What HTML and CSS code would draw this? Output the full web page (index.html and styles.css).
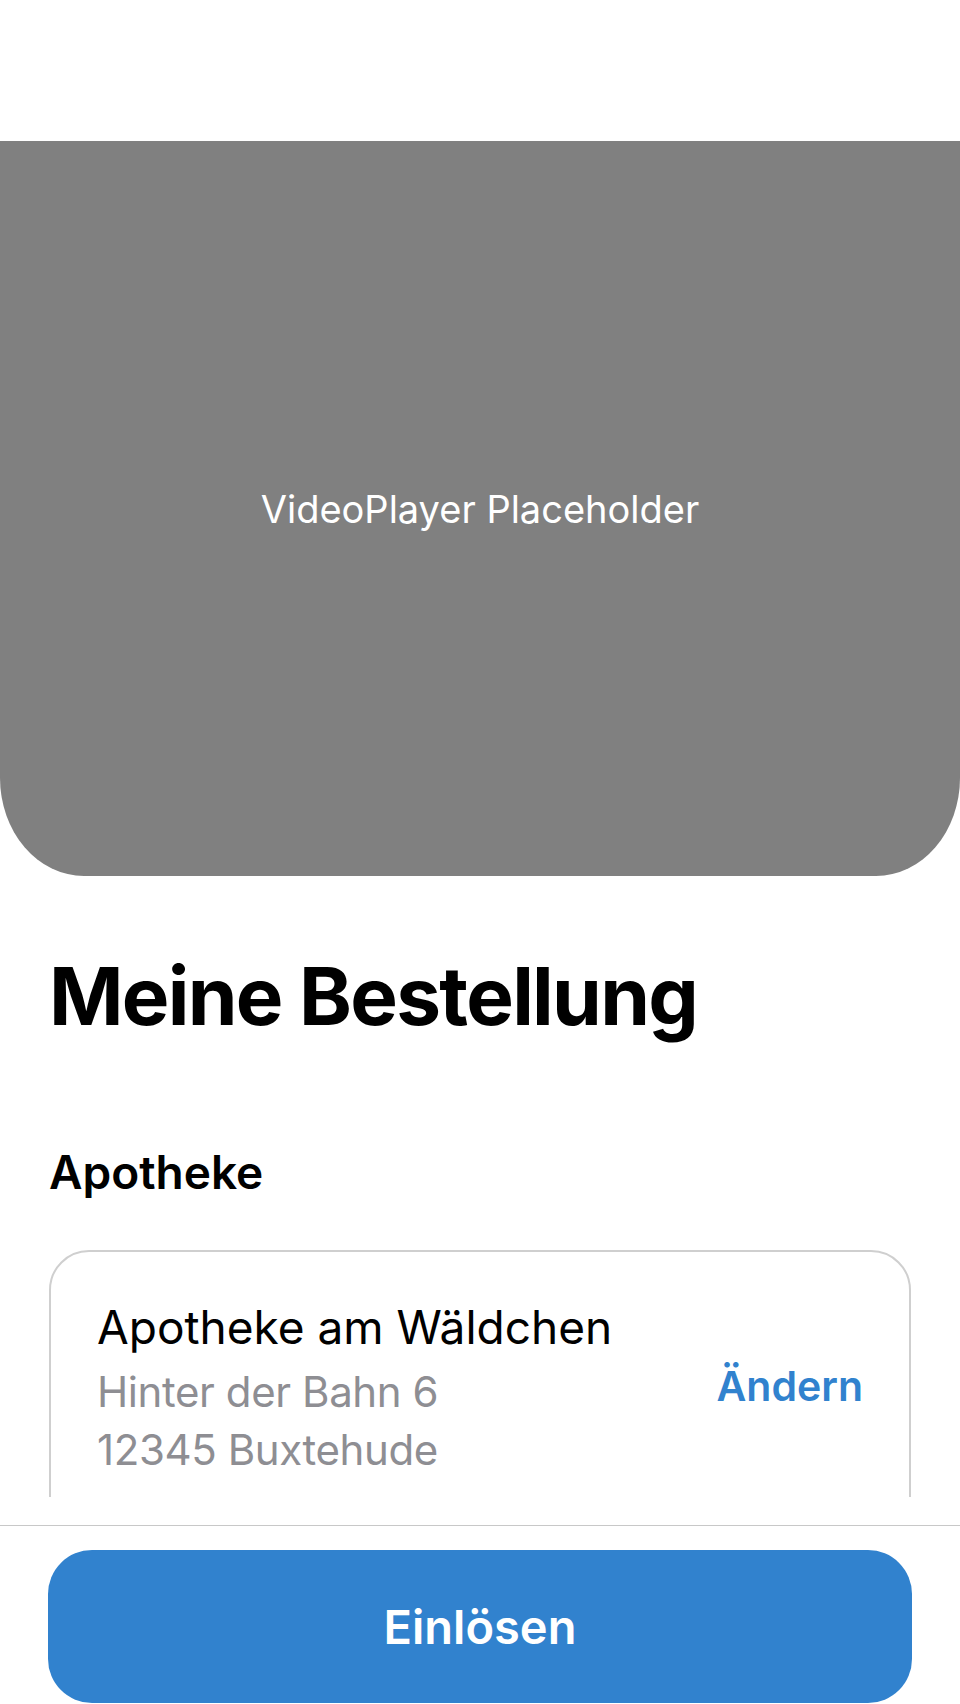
FILE: index.html
```html
<!DOCTYPE html>
<html lang="de">
<head>
<meta charset="utf-8">
<title>Meine Bestellung</title>
<link rel="stylesheet" href="styles.css">
</head>
<body>
<div class="page">
  <main class="scroll">
    <div class="video"><span class="video-label">VideoPlayer Placeholder</span></div>
    <div class="content">
      <h1 class="title">Meine Bestellung</h1>
      <h2 class="section">Apotheke</h2>
      <div class="card">
        <div class="pharmacy">
          <div class="pharmacy-name">Apotheke am Wäldchen</div>
          <div class="pharmacy-address">
            <div>Hinter der Bahn 6</div>
            <div>12345 Buxtehude</div>
          </div>
        </div>
        <a class="change" href="#">Ändern</a>
      </div>
    </div>
  </main>
  <footer class="footer">
    <button class="redeem" type="button">Einlösen</button>
  </footer>
</div>
</body>
</html>
```
FILE: styles.css
```css
html, body {
  margin: 0;
  padding: 0;
  background: #ffffff;
}
body {
  font-family: Inter, "Noto Sans", "Liberation Sans", sans-serif;
  color: #000000;
}
.page {
  width: 960px;
  height: 1704px;
  display: flex;
  flex-direction: column;
  overflow: hidden;
}
.scroll {
  height: 1497px;
  flex: none;
  overflow: hidden;
  padding-top: 141px;
  box-sizing: border-box;
}
.video {
  height: 735px;
  background: #808080;
  border-radius: 0 0 84px 84px / 0 0 98px 98px;
  display: flex;
  align-items: center;
  justify-content: center;
}
.video-label {
  color: #ffffff;
  font-size: 38px;
  line-height: 46px;
  font-weight: 400;
}
.content {
  padding: 0 49px;
}
.title {
  margin: 72px 0 0;
  font-size: 80px;
  line-height: 96px;
  font-weight: 700;
  letter-spacing: -1.7px;
}
.section {
  margin: 100px 0 0;
  font-size: 46px;
  line-height: 56px;
  font-weight: 600;
}
.card {
  margin-top: 50px;
  border: 2px solid #cfcfcf;
  border-radius: 40px;
  padding: 47px 46px 60px 46px;
  display: flex;
  align-items: center;
  justify-content: space-between;
}
.pharmacy-name {
  font-size: 46px;
  line-height: 56px;
}
.pharmacy-address {
  margin-top: 8px;
  font-size: 42px;
  line-height: 58px;
  letter-spacing: -0.4px;
  color: #8e8e93;
}
.change {
  margin-bottom: 6px;
  color: #3182ce;
  font-size: 41px;
  line-height: 46px;
  font-weight: 600;
  text-decoration: none;
}
.footer {
  flex: 1;
  margin-top: 28px;
  border-top: 1px solid #c8c8c8;
  padding: 24px 48px 0 48px;
}
.redeem {
  display: block;
  width: 100%;
  height: 153px;
  border: none;
  border-radius: 44px;
  background: #3182ce;
  color: #ffffff;
  font-family: inherit;
  font-size: 47px;
  font-weight: 600;
  padding: 0;
}
```
